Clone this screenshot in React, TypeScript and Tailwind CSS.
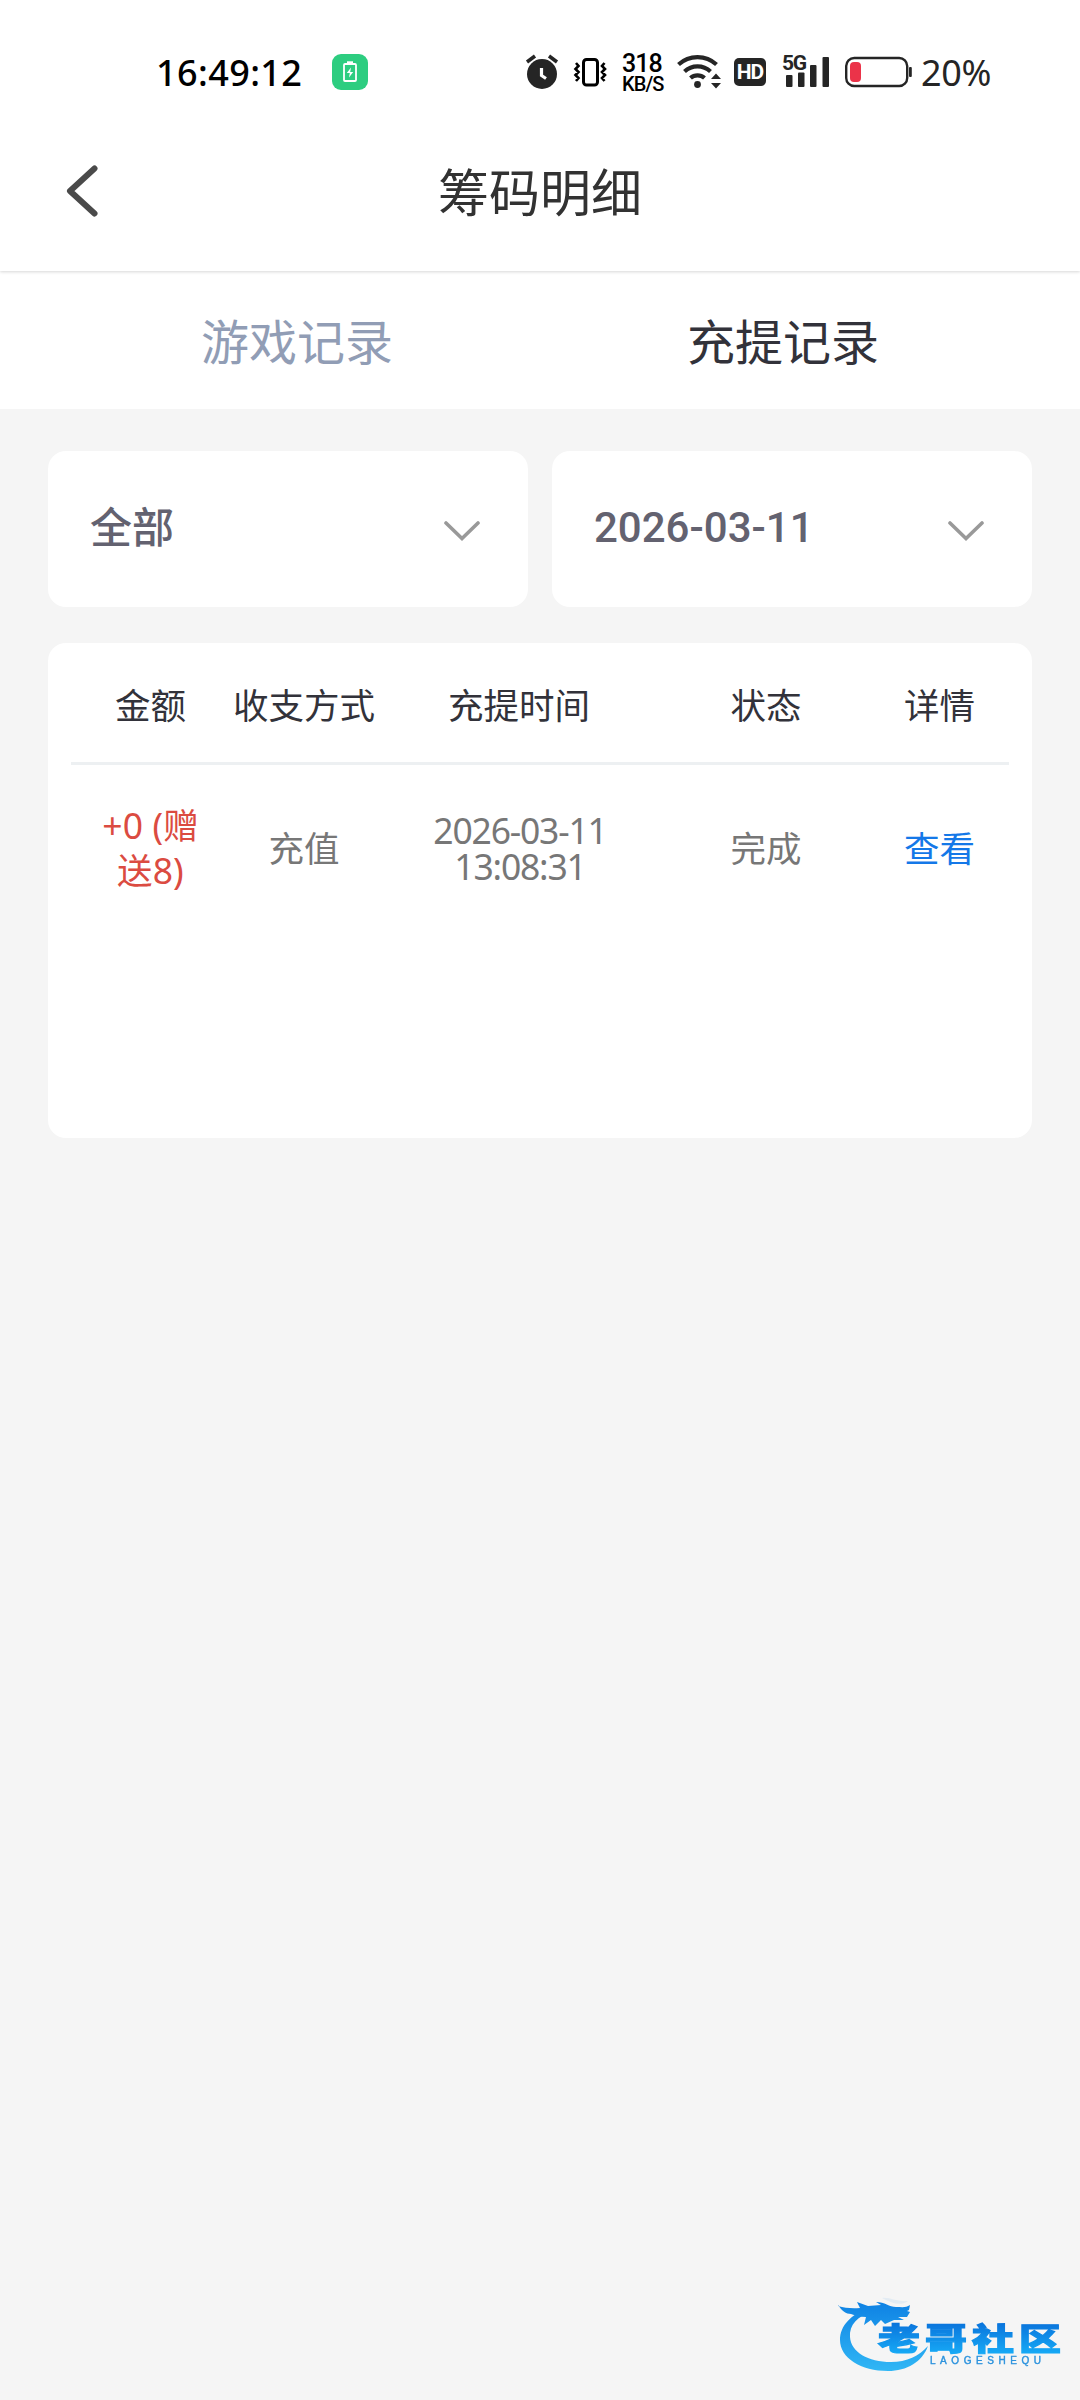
import { ReactNode } from "react";

type ChipRecord = {
  id: number;
  amount: string[];
  method: string;
  time: string[];
  status: string;
};

const records: ChipRecord[] = [
  {
    id: 1,
    amount: ["+0 (赠", "送8)"],
    method: "充值",
    time: ["2026-03-11", "13:08:31"],
    status: "完成",
  },
];

const columns = ["金额", "收支方式", "充提时间", "状态", "详情"];

const gridCols = "grid grid-cols-[159px_148px_282px_212px_135px]";

const StatusBar = () => {
  return (
    <div className="flex h-36 items-center pl-[156px] text-[#252525]">
      <p className="w-[176px] pt-0.5 text-[36px] leading-9 font-medium tracking-[0.4px] text-black">
        16:49:12
      </p>
      <div className="flex h-9 w-9 items-center justify-center rounded-[9px] bg-[#2dcd80]">
        <svg className="h-[22px] w-4" viewBox="0 0 16 22" fill="none">
          <path d="M5 1.500h6" stroke="#fff" strokeWidth="2.400" />
          <rect x="2" y="3" width="12" height="17" rx="1" stroke="#fff" strokeWidth="1.800" />
          <path d="M9 6.500 4.800 12h3L7 16.500l4.200-5.500h-3z" fill="#fff" />
        </svg>
      </div>

      <svg className="ml-[157px] h-9 w-[34px]" viewBox="525 54 34 36" fill="none">
        <circle cx="542" cy="74" r="15" fill="currentColor" />
        <path d="m527 62 8-6M557 62l-8-6" stroke="currentColor" strokeWidth="3.600" />
        <path d="M541.500 68v7.500l4.500 3" stroke="#fff" strokeWidth="3.200" />
      </svg>
      <svg className="ml-[14px] h-9 w-9 text-black" viewBox="573 54 36 36" fill="none">
        <rect x="583.500" y="59.500" width="14" height="25.500" rx="3" stroke="currentColor" strokeWidth="3" />
        <path
          d="m576 63 2.500 3-3 3 3 3-3 3 3 3-2.500 3M604.500 63l-2.500 3 3 3-3 3 3 3-3 3 2.500 3"
          stroke="currentColor"
          strokeWidth="2.600"
        />
      </svg>
      <div className="ml-[13px] flex h-[42px] w-[55px] flex-col justify-center pt-px font-[Roboto] text-black">
        <p className="text-[25px] leading-[22px] font-medium tracking-[-0.9px]">318</p>
        <p className="text-[20px] leading-[18px] font-medium tracking-[-0.9px]">KB/S</p>
      </div>
      <svg className="h-9 w-[46px]" viewBox="677 54 46 36" fill="none">
        <path
          d="M678.500 64.500a28 28 0 0 1 38 0M684.500 71.500a19 19 0 0 1 26 0M690.500 78a10.500 10.500 0 0 1 14 0"
          stroke="currentColor"
          strokeWidth="4.200"
        />
        <circle cx="697.500" cy="84.500" r="3.400" fill="currentColor" />
        <path d="m716 73.500 5 5.500h-10zM716 88.500l5-5.500h-10z" fill="currentColor" />
      </svg>
      <div className="ml-[11px] flex h-7 w-8 items-center justify-center rounded-[5px] bg-[#252525]">
        <span className="font-[Roboto] text-[21px] leading-none font-bold tracking-[-1px] text-white">
          HD
        </span>
      </div>
      <div className="relative ml-[16px] h-9 w-[48px]">
        <span className="absolute -top-[1px] left-0 font-[Roboto] text-[21px] leading-[20px] font-bold tracking-[-1.2px]">
          5G
        </span>
        <svg className="h-9 w-[48px]" viewBox="782 54 48 36" fill="currentColor">
          <rect x="786" y="75" width="6.500" height="12" rx="1" />
          <rect x="798" y="72.500" width="6.500" height="14.500" rx="1" />
          <rect x="810" y="65" width="6.500" height="22" rx="1" />
          <rect x="822.500" y="57" width="6.500" height="30" rx="1" />
        </svg>
      </div>
      <svg className="ml-[14px] h-9 w-[70px]" viewBox="844 54 70 36" fill="none">
        <rect x="846.200" y="58" width="61" height="28" rx="8" stroke="currentColor" strokeWidth="2.400" />
        <rect x="850" y="62" width="11" height="20" rx="4" fill="#eb3349" />
        <rect x="909" y="67" width="2.800" height="10" rx="1" fill="currentColor" />
      </svg>
      <p className="ml-[7px] pt-0.5 text-[36px] leading-9 tracking-[-0.3px]">20%</p>
    </div>
  );
};

const FilterSelect = ({ children }: { children: ReactNode }) => {
  return (
    <div className="flex h-[156px] w-[480px] items-center justify-between rounded-[18px] bg-white pr-12 pl-[42px] text-[42px] leading-[60px] font-medium text-[#636270]">
      {children}
      <svg className="mt-[3px] h-[22px] w-9" viewBox="0 0 36 22" fill="none">
        <path d="m2 3 16 15.500L34 3" stroke="#999" strokeWidth="3.600" strokeLinecap="round" />
      </svg>
    </div>
  );
};

const Watermark = () => {
  return (
    <svg className="h-[90px] w-[240px] blur-[0.6px]" viewBox="830 2290 240 90">
      <defs>
        <linearGradient id="wave" x1="0" y1="2304" x2="0" y2="2371" gradientUnits="userSpaceOnUse">
          <stop offset="0" stopColor="#0f83e4" />
          <stop offset="1" stopColor="#31b7f5" />
        </linearGradient>
        {/* runs in the glyphs' own space, baseline at 0 */}
        <linearGradient id="brand" x1="0" y1="-29" x2="0" y2="3" gradientUnits="userSpaceOnUse">
          <stop offset="0" stopColor="#0a74dc" />
          <stop offset="1" stopColor="#16a8f5" />
        </linearGradient>
      </defs>
      <g fill="url(#wave)">
        <path d="M868 2309c-17 5-28 17-28 31 0 18 21 31 48 31 19 0 34-9 40-25-9 10-21 16-37 16-23 0-40-10-41-25-1-12 8-21 21-25z" />
        <path d="M838 2306c7 2 13 2.500 22 2l-3-6 11 4 13-1-5-3c9 0 13 5 20 5 6 0 10 1 14-2l-1 5-2 1 3 1-3 5h-9l6 3h-10l-9 4-4-4-6 6-4-6-7 5 2-8c-6 0-10-1-15-3-5 0-9-3-13-9z" />
        <path d="M882 2298c8-1 14 4 26 3-7 5-15 3-26-3z" opacity=".08" />
      </g>
      <g
        fill="url(#brand)"
        stroke="url(#brand)"
        strokeWidth="1.300"
        fontFamily="'Noto Sans CJK SC', sans-serif"
        fontSize="33"
        fontWeight="900"
      >
        <text transform="translate(878 2350) scale(1.270 .930)">老</text>
        <text transform="translate(925 2350) scale(1.270 .930)">哥</text>
        <text transform="translate(972 2350) scale(1.270 .930)">社</text>
        <text transform="translate(1019 2350) scale(1.270 .930)">区</text>
      </g>
      <text
        x="930"
        y="2364"
        fill="#2b92dd"
        stroke="#2b92dd"
        strokeWidth=".4"
        fontFamily="'Liberation Sans', sans-serif"
        fontSize="10"
        textLength="111"
      >
        LAOGESHEQU
      </text>
    </svg>
  );
};

const App = () => {
  return (
    <div className="flex h-[2400px] w-[1080px] flex-col bg-[#f5f5f5] font-['Noto_Sans','Noto_Sans_CJK_SC',sans-serif]">
      <header className="z-10 h-[271px] bg-white shadow-[0_1px_3px_rgba(0,0,0,0.16)]">
        <StatusBar />
        <div className="flex h-[94px] items-center justify-between px-[65px]">
          <svg className="h-[52px] w-[34px]" viewBox="0 0 34 52" fill="none">
            <path
              d="M29.500 3.500 5 26l24.500 22.500"
              stroke="#4a4a4a"
              strokeWidth="6"
              strokeLinecap="round"
              strokeLinejoin="round"
            />
          </svg>
          <h1 className="pt-px text-[51px] leading-[72px] text-[#323232]">筹码明细</h1>
          <div className="w-[34px]" />
        </div>
      </header>

      <nav className="grid h-[138px] grid-cols-2 items-center bg-white px-[54px] pt-1 text-center text-[48px] leading-[68px]">
        <p className="text-[#919db5]">游戏记录</p>
        <p className="text-[#32323a]">充提记录</p>
      </nav>

      <main className="flex grow flex-col px-12 pt-[42px]">
        <div className="flex gap-6">
          <FilterSelect>
            <span className="pb-1">全部</span>
          </FilterSelect>
          <FilterSelect>
            <span className="pb-0.5 font-[Roboto]">2026-03-11</span>
          </FilterSelect>
        </div>

        <section className="mt-9 h-[495px] rounded-[18px] bg-white px-[23px] text-center text-[36px]">
          <div
            className={`${gridCols} h-[122px] items-center border-b-[3px] border-[#edf0f2] pt-1 text-[35.500px] leading-[50px] text-[#32323a]`}
          >
            {columns.map((column) => (
              <p key={column}>{column}</p>
            ))}
          </div>
          {records.map((record) => (
            <div
              key={record.id}
              className={`${gridCols} h-[166px] items-center text-[35.500px] leading-[45px] text-[#777]`}
            >
              <div className="pb-px text-[#db4b41]">
                {record.amount.map((line) => (
                  <p key={line} className="tracking-[0.1px]">
                    {line}
                  </p>
                ))}
              </div>
              <p>{record.method}</p>
              <div className="pl-0.5 leading-9 tracking-[-1.200px]">
                {record.time.map((line) => (
                  <p key={line}>{line}</p>
                ))}
              </div>
              <p>{record.status}</p>
              <p className="text-[#1478e8]">查看</p>
            </div>
          ))}
        </section>

        <div className="-mr-[38px] mt-auto mb-5 self-end">
          <Watermark />
        </div>
      </main>
    </div>
  );
};

export default App;
